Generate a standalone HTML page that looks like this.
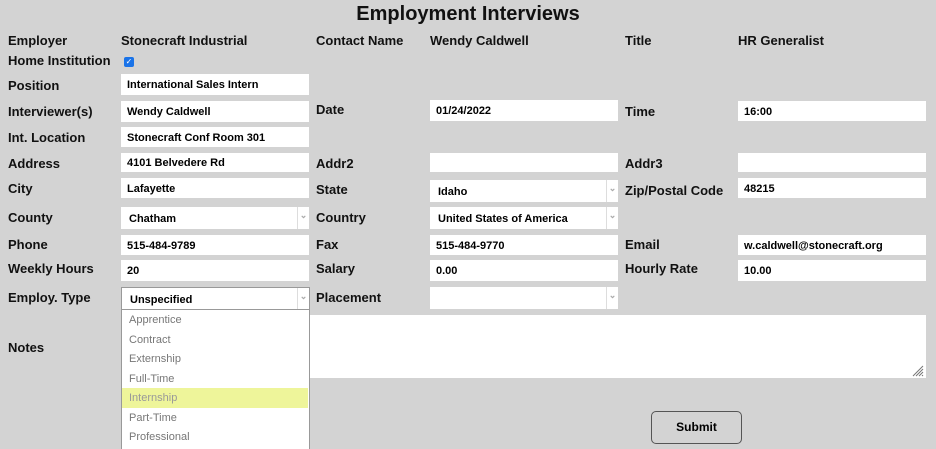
<!DOCTYPE html>
<html><head><style>
body{margin:0;width:936px;height:449px;background:#d3d3d3;font-family:"Liberation Sans",Arial,sans-serif;position:relative;overflow:hidden}
.a{position:absolute}
.l{position:absolute;font-size:13px;font-weight:bold;color:#111;white-space:nowrap;line-height:16px}
.i{position:absolute;background:#fff;font-size:11px;font-weight:bold;color:#000;padding-left:6px;padding-top:1px;box-sizing:border-box;white-space:nowrap;display:flex;align-items:center}
.s{position:absolute;background:#fff;font-size:11px;font-weight:bold;padding-left:8px;padding-top:2px;box-sizing:border-box;display:flex;align-items:center}
.s:after{content:"⌄";position:absolute;right:0;top:0;width:11px;height:100%;border-left:1px solid #ddd;color:#aaa;font-size:9px;text-align:center;line-height:16px}
.o{position:absolute;left:0;width:186px;height:19.5px;line-height:20px;padding-left:7px;font-size:11px;color:#777;box-sizing:border-box}
</style></head><body>
<div class="a" style="left:0;width:936px;top:3px;text-align:center;font-size:20px;font-weight:bold;color:#111">Employment Interviews</div>

<div class="l" style="left:8px;top:33px">Employer</div>
<div class="l" style="left:121px;top:33px">Stonecraft Industrial</div>
<div class="l" style="left:316px;top:33px">Contact Name</div>
<div class="l" style="left:430px;top:33px">Wendy Caldwell</div>
<div class="l" style="left:625px;top:33px">Title</div>
<div class="l" style="left:738px;top:33px">HR Generalist</div>

<div class="l" style="left:8px;top:53px">Home Institution</div>
<div class="a" style="left:124px;top:57px;width:10px;height:10px;background:#1a73e8;border-radius:2px;color:#fff;font-size:8px;line-height:10px;text-align:center">✓</div>

<div class="l" style="left:8px;top:78px">Position</div>
<div class="i" style="left:121px;top:74px;width:188px;height:21px">International Sales Intern</div>

<div class="l" style="left:8px;top:104px">Interviewer(s)</div>
<div class="i" style="left:121px;top:101px;width:188px;height:21px">Wendy Caldwell</div>
<div class="l" style="left:316px;top:102px">Date</div>
<div class="i" style="left:430px;top:100px;width:188px;height:21px">01/24/2022</div>
<div class="l" style="left:625px;top:104px">Time</div>
<div class="i" style="left:738px;top:101px;width:188px;height:20px">16:00</div>

<div class="l" style="left:8px;top:130px">Int. Location</div>
<div class="i" style="left:121px;top:127px;width:188px;height:20px">Stonecraft Conf Room 301</div>

<div class="l" style="left:8px;top:156px">Address</div>
<div class="i" style="left:121px;top:153px;width:188px;height:19px">4101 Belvedere Rd</div>
<div class="l" style="left:316px;top:156px">Addr2</div>
<div class="i" style="left:430px;top:153px;width:188px;height:19px"></div>
<div class="l" style="left:625px;top:156px">Addr3</div>
<div class="i" style="left:738px;top:153px;width:188px;height:19px"></div>

<div class="l" style="left:8px;top:181px">City</div>
<div class="i" style="left:121px;top:178px;width:188px;height:20px">Lafayette</div>
<div class="l" style="left:316px;top:182px">State</div>
<div class="s" style="left:430px;top:180px;width:188px;height:22px">Idaho</div>
<div class="l" style="left:625px;top:183px">Zip/Postal Code</div>
<div class="i" style="left:738px;top:178px;width:188px;height:20px">48215</div>

<div class="l" style="left:8px;top:210px">County</div>
<div class="s" style="left:121px;top:207px;width:188px;height:22px">Chatham</div>
<div class="l" style="left:316px;top:210px">Country</div>
<div class="s" style="left:430px;top:207px;width:188px;height:22px">United States of America</div>

<div class="l" style="left:8px;top:237px">Phone</div>
<div class="i" style="left:121px;top:235px;width:188px;height:20px">515-484-9789</div>
<div class="l" style="left:316px;top:237px">Fax</div>
<div class="i" style="left:430px;top:235px;width:188px;height:20px">515-484-9770</div>
<div class="l" style="left:625px;top:237px">Email</div>
<div class="i" style="left:738px;top:235px;width:188px;height:20px">w.caldwell@stonecraft.org</div>

<div class="l" style="left:8px;top:261px">Weekly Hours</div>
<div class="i" style="left:121px;top:260px;width:188px;height:21px">20</div>
<div class="l" style="left:316px;top:261px">Salary</div>
<div class="i" style="left:430px;top:260px;width:188px;height:21px">0.00</div>
<div class="l" style="left:625px;top:261px">Hourly Rate</div>
<div class="i" style="left:738px;top:260px;width:188px;height:21px">10.00</div>

<div class="l" style="left:8px;top:290px">Employ. Type</div>
<div class="s" style="left:121px;top:287px;width:189px;height:23px;border:1px solid #999">Unspecified</div>
<div class="l" style="left:316px;top:290px">Placement</div>
<div class="s" style="left:430px;top:287px;width:188px;height:22px"></div>

<div class="l" style="left:8px;top:340px">Notes</div>
<div class="a" style="left:121px;top:315px;width:805px;height:63px;background:#fff"></div>
<svg class="a" style="left:912px;top:365px" width="12" height="12"><path d="M1 11L11 1M4 11L11 4M7 11L11 7M10 11L11 10" stroke="#777" stroke-width="1"/></svg>

<div class="a" style="left:121px;top:310px;width:187px;height:139px;background:#fff;border-left:1px solid #999;border-right:1px solid #999">
<div class="o" style="top:0">Apprentice</div>
<div class="o" style="top:19.5px">Contract</div>
<div class="o" style="top:39px">Externship</div>
<div class="o" style="top:58.5px">Full-Time</div>
<div class="o" style="top:78px;background:#eef59a;color:#999">Internship</div>
<div class="o" style="top:97.5px">Part-Time</div>
<div class="o" style="top:117px">Professional</div>
</div>

<div class="a" style="left:651px;top:411px;width:91px;height:33px;border:1px solid #555;border-radius:5px;box-sizing:border-box;text-align:center;line-height:31px;font-size:12px;font-weight:bold">Submit</div>
</body></html>
